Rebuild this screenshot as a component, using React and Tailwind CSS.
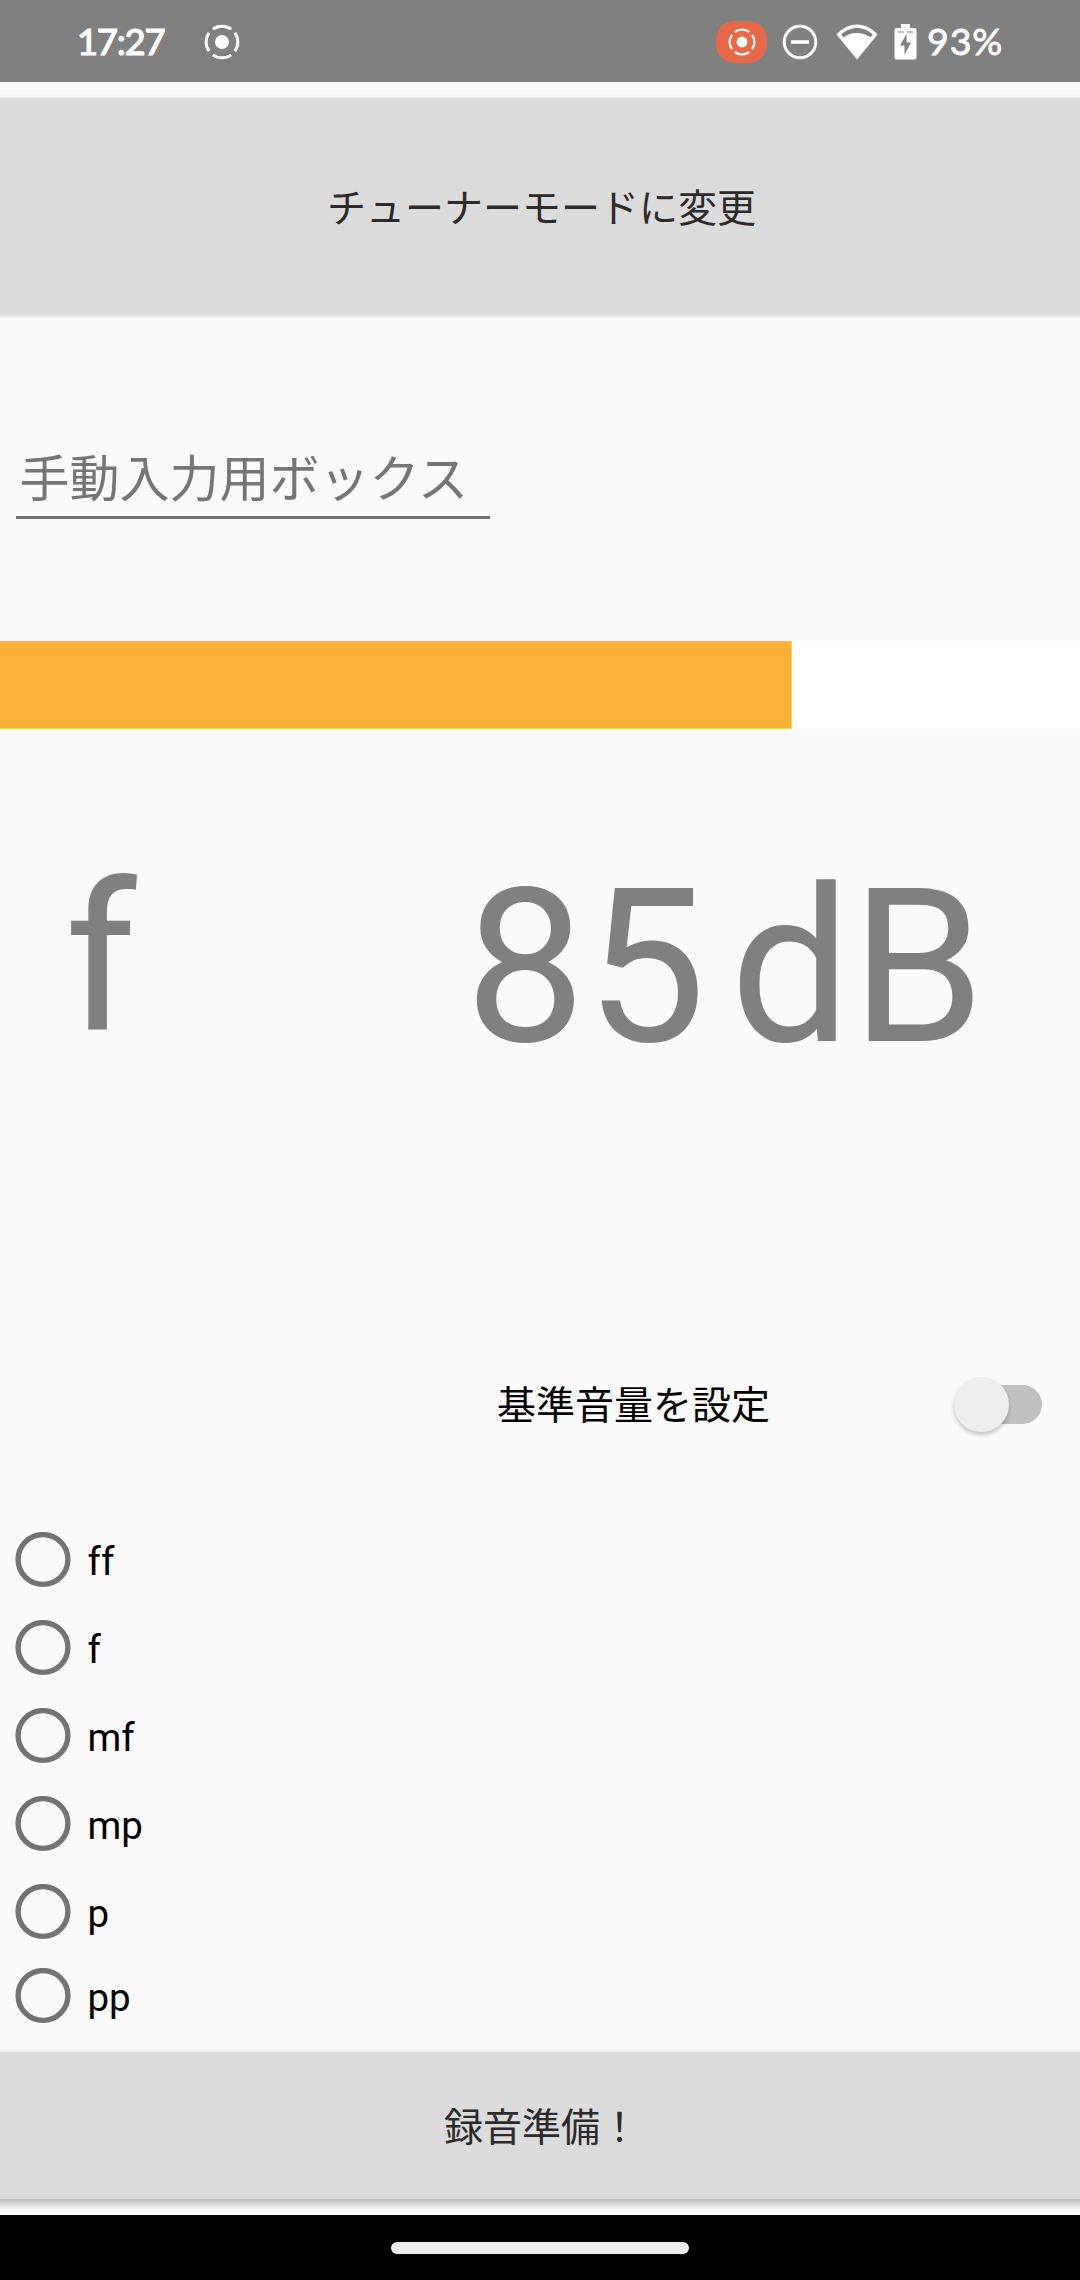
const DYNAMICS = [
  { label: "ff", height: "h-[88px]" },
  { label: "f", height: "h-[88px]" },
  { label: "mf", height: "h-[88px]" },
  { label: "mp", height: "h-[88px]" },
  { label: "p", height: "h-[88px]" },
  { label: "pp", height: "h-[80px]" },
];

function RecordIcon({ className }) {
  return (
    <svg viewBox="0 0 36 36" className={className} fill="none" stroke="white" strokeWidth="3">
      <circle cx="18" cy="18" r="7" fill="white" stroke="none" />
      <path d="M8.8 5.1A15.8 15.8 0 0 1 27.2 5.1M8.8 30.9A15.8 15.8 0 0 0 27.2 30.9M5.1 8.8A15.8 15.8 0 0 0 5.1 27.2M30.9 8.8A15.8 15.8 0 0 1 30.9 27.2" />
    </svg>
  );
}

function StatusBar() {
  return (
    <header className='flex h-[82px] shrink-0 items-center bg-[#808080] pb-[1px] pl-[77px] font-["Lato",sans-serif] leading-none text-white'>
      <span className="mt-[2px] w-[127px] text-[36.5px] tracking-[-1.3px] [-webkit-text-stroke:1.2px_white]">17:27</span>
      <RecordIcon className="mt-[3px] h-9 w-9" />
      <div className="ml-[476px] mt-[3px] flex h-[42px] w-[51px] items-center justify-center rounded-[19px] bg-[#e8694a]">
        <RecordIcon className="h-7 w-7" />
      </div>
      <svg className="ml-[15px] mt-[2px] h-9 w-9" viewBox="0 0 36 36" fill="none" stroke="white" strokeWidth="3">
        <circle cx="18" cy="18" r="15.8" />
        <path d="M9 18h18" strokeWidth="3.6" />
      </svg>
      <svg className="ml-[18px] mt-[2px] h-[36px] w-[42px]" viewBox="0 0 42 36">
        <path d="M0.5 10.5C12 -3 30 -3 41.5 10.5L21 35.5Z" fill="white" />
        <path d="M5.3 10.7C14 1.8 28 1.8 36.7 10.7L34.5 13.3C27 7.5 15 7.5 7.5 13.3Z" fill="#808080" />
      </svg>
      <svg className="ml-[16px] mt-[3px] h-[36px] w-[23px]" viewBox="0 0 23 36">
        <path d="M7 0h9v4h4.500a2 2 0 0 1 2 2v27.500a2 2 0 0 1-2 2h-18a2 2 0 0 1-2-2V6a2 2 0 0 1 2-2H7Z" fill="white" />
        <path d="M4 8h6M13 8h6" stroke="#808080" strokeWidth="1" />
        <path d="M12.5 10 6 21.500h4.500V31L17 18.500h-4.500Z" fill="#808080" />
      </svg>
      <span className="ml-[10px] text-[37.5px] tracking-[0.9px] [-webkit-text-stroke:0.8px_white]">93%</span>
    </header>
  );
}

function DynamicOption({ label, height }) {
  return (
    <label className={`flex items-center ${height}`}>
      <svg className="h-[56px] w-[56px]" viewBox="0 0 56 56">
        <circle cx="28" cy="27.5" r="24.9" fill="none" stroke="#737373" strokeWidth="5.4" />
      </svg>
      <span className="ml-[16.5px] mt-[3px] text-[38.5px] leading-[46px] text-black [font-variant-ligatures:none]">{label}</span>
    </label>
  );
}

export default function App() {
  return (
    <div className='flex h-[2280px] w-[1080px] flex-col overflow-hidden bg-[#fafafa] font-["Roboto",sans-serif]'>
      <StatusBar />
      <button className='-mx-2 mt-[16px] h-[216px] shrink-0 bg-[#dbdbdb] pb-[3px] pl-[3px] font-["Noto_Sans_CJK_JP",sans-serif] text-[39px] leading-[56px] text-[#2b2b2b] shadow-[0_1px_5px_rgba(0,0,0,0.2)]'>
        チューナーモードに変更
      </button>
      <input
        placeholder="手動入力用ボックス"
        className='ml-[16px] mt-[121px] h-[84px] w-[474px] shrink-0 border-b-[3px] border-[#757575] bg-transparent pb-[2px] pl-[3.5px] font-["Noto_Sans_CJK_JP",sans-serif] text-[50px] outline-none placeholder:text-[#757575] placeholder:opacity-100'
      />
      <div className="mt-[122px] h-[88px] shrink-0 bg-white">
        <div className="h-full w-[792px] border-r border-b border-[#ffd54a] bg-[#fdb03a]" />
      </div>
      <div className="flex h-[371px] shrink-0 text-[214.5px] leading-[252px] text-[#808080]">
        <span className="ml-[65px] mt-[105px] w-[400px] text-[206px]">f</span>
        <span className="mt-[113px] w-[265px]">85</span>
        <span className="mt-[113px]">dB</span>
      </div>
      <div className="mt-[248px] flex h-[112px] shrink-0 items-center pl-[497px]">
        <span className='mb-[4px] w-[457px] font-["Noto_Sans_CJK_JP",sans-serif] text-[39px] leading-[56px] text-black'>基準音量を設定</span>
        <div className="flex h-[39px] w-[88px] items-center rounded-full bg-[linear-gradient(90deg,transparent_28px,#bfbfbf_28px)]">
          <span className="h-[55px] w-[55px] shrink-0 rounded-full bg-[#ededed] shadow-[0_3px_4px_rgba(0,0,0,0.22)]" />
        </div>
      </div>
      <div className="mt-[56px] flex shrink-0 flex-col pl-[15px]">
        {DYNAMICS.map((d) => (
          <DynamicOption key={d.label} label={d.label} height={d.height} />
        ))}
      </div>
      <button className='-mx-2 mt-[16px] h-[147px] shrink-0 bg-[#dbdbdb] pb-[3px] pl-[3px] font-["Noto_Sans_CJK_JP",sans-serif] text-[39px] leading-[56px] text-[#2b2b2b] shadow-[0_4px_8px_rgba(0,0,0,0.3)]'>
        録音準備！
      </button>
      <nav className="relative mt-auto flex h-[65px] shrink-0 items-center justify-center bg-black">
        <span className="h-[12px] w-[298px] rounded-full bg-[#ededed]" />
      </nav>
    </div>
  );
}
